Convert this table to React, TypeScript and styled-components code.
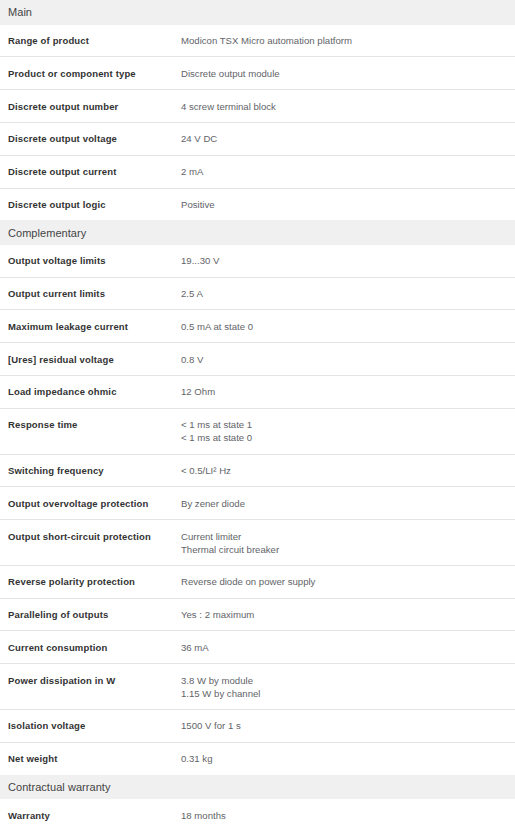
import styled, { createGlobalStyle } from "styled-components";

const GlobalStyle = createGlobalStyle`
  html, body { margin: 0; padding: 0; background: #ffffff; }
  body { font-family: "Liberation Sans", Arial, sans-serif; }
`;

type Spec = { label: string; value: string[] };
type Group = { title: string; rows: Spec[] };

const groups: Group[] = [
  {
    title: "Main",
    rows: [
      { label: "Range of product", value: ["Modicon TSX Micro automation platform"] },
      { label: "Product or component type", value: ["Discrete output module"] },
      { label: "Discrete output number", value: ["4 screw terminal block"] },
      { label: "Discrete output voltage", value: ["24 V DC"] },
      { label: "Discrete output current", value: ["2 mA"] },
      { label: "Discrete output logic", value: ["Positive"] },
    ],
  },
  {
    title: "Complementary",
    rows: [
      { label: "Output voltage limits", value: ["19...30 V"] },
      { label: "Output current limits", value: ["2.5 A"] },
      { label: "Maximum leakage current", value: ["0.5 mA at state 0"] },
      { label: "[Ures] residual voltage", value: ["0.8 V"] },
      { label: "Load impedance ohmic", value: ["12 Ohm"] },
      { label: "Response time", value: ["< 1 ms at state 1", "< 1 ms at state 0"] },
      { label: "Switching frequency", value: ["< 0.5/LI² Hz"] },
      { label: "Output overvoltage protection", value: ["By zener diode"] },
      { label: "Output short-circuit protection", value: ["Current limiter", "Thermal circuit breaker"] },
      { label: "Reverse polarity protection", value: ["Reverse diode on power supply"] },
      { label: "Paralleling of outputs", value: ["Yes : 2 maximum"] },
      { label: "Current consumption", value: ["36 mA"] },
      { label: "Power dissipation in W", value: ["3.8 W by module", "1.15 W by channel"] },
      { label: "Isolation voltage", value: ["1500 V for 1 s"] },
      { label: "Net weight", value: ["0.31 kg"] },
    ],
  },
  {
    title: "Contractual warranty",
    rows: [{ label: "Warranty", value: ["18 months"] }],
  },
];

const Table = styled.div`
  width: 515px;
  display: flex;
  flex-direction: column;
`;

const Section = styled.section`
  display: flex;
  flex-direction: column;
`;

const SectionHeader = styled.div`
  height: 24.6px;
  display: flex;
  align-items: center;
  padding: 0 8px;
  background: #f0f0f0;
  font-size: 11px;
  color: #444444;
  letter-spacing: 0.05px;
`;

const Row = styled.div`
  display: grid;
  grid-template-columns: 181px 1fr;
  padding: 9.4px 0;
  border-bottom: 1px solid #e4e4e4;
  line-height: 13px;
  &:last-child { border-bottom: none; }
`;

const Label = styled.div`
  padding-left: 8px;
  font-size: 9.5px;
  font-weight: 700;
  color: #333333;
  letter-spacing: 0.15px;
`;

const Value = styled.div`
  font-size: 9.6px;
  color: #626469;
  div { white-space: nowrap; }
`;

export default function App() {
  return (
    <>
      <GlobalStyle />
      <Table>
        {groups.map((g) => (
          <Section key={g.title}>
            <SectionHeader>{g.title}</SectionHeader>
            {g.rows.map((r) => (
              <Row key={r.label}>
                <Label>{r.label}</Label>
                <Value>
                  {r.value.map((v, i) => (
                    <div key={i}>{v}</div>
                  ))}
                </Value>
              </Row>
            ))}
          </Section>
        ))}
      </Table>
    </>
  );
}
